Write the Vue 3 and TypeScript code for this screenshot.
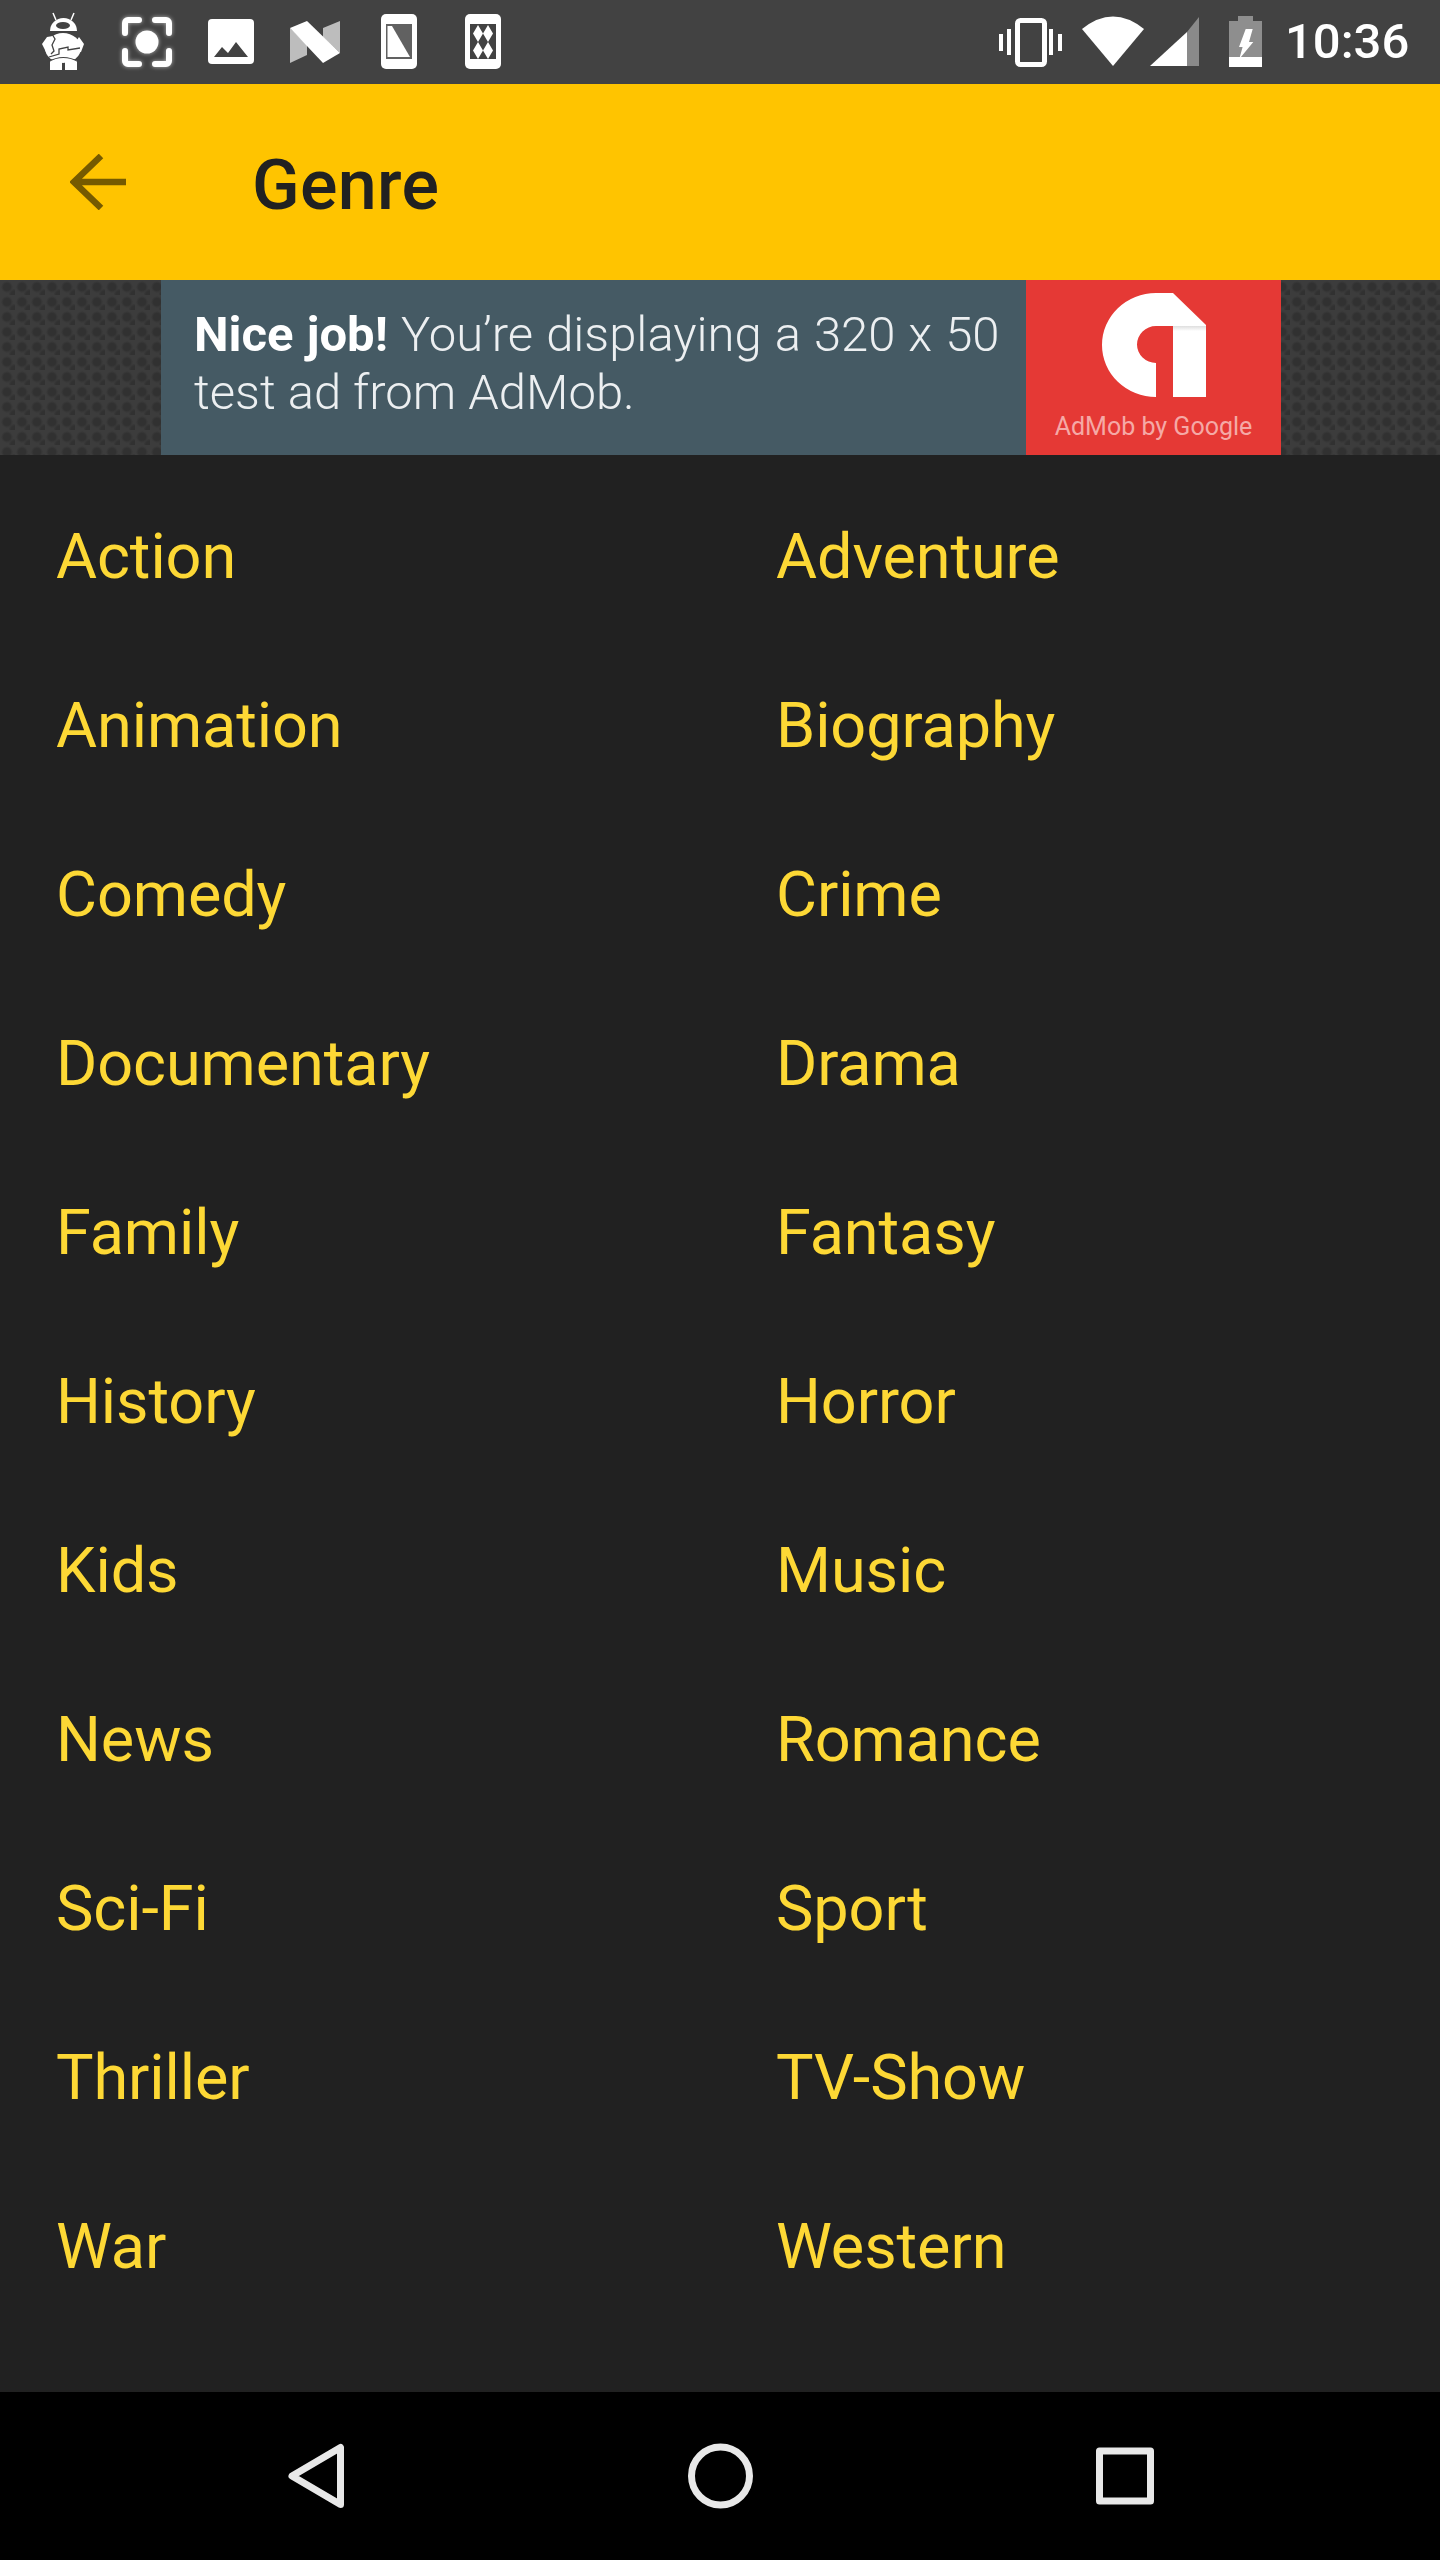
<template>
  <div class="screen">
    <div class="status-bar">
      <div class="status-left">
        <svg class="slot" viewBox="0 0 84 84" fill="#fff">
          <path d="M29 31a13.5 13 0 0 1 27 0z" />
          <path d="M35 20l-3-7M50 20l3-7" stroke="#fff" stroke-width="1.5" />
          <ellipse cx="42" cy="25.500" rx="7" ry="3.500" fill="#424242" />
          <ellipse cx="42" cy="48" rx="18" ry="15" />
          <path d="M26 37l-5 7 4 8 6 4 3-4-2-4 3-7-3-5zM58 37l5 7-3 8-5 1-1-10z" />
          <path d="M29 60h12v10H29zM44 60h12v10H44z" />
          <path d="M31 34l3 5-3 6 2 6-3 3M28 57l10-3v-5l9-2v3l12-2" fill="none" stroke="#424242" stroke-width="1.300" />
          <path d="M27 62q15-9 31 0" fill="none" stroke="#424242" stroke-width="1.200" />
        </svg>
        <svg class="slot focus" viewBox="0 0 84 84" fill="none" stroke="#fff" stroke-width="6" stroke-linecap="round" stroke-linejoin="round">
          <path d="M34 20H23a3 3 0 0 0-3 3v10M50 20h11a3 3 0 0 1 3 3v10M20 51v10a3 3 0 0 0 3 3h11M64 51v10a3 3 0 0 1-3 3H50" />
          <circle cx="42" cy="42" r="11.500" fill="#fff" stroke="none" />
        </svg>
        <svg class="slot" viewBox="0 0 84 84">
          <rect x="19" y="19" width="46" height="45" rx="4" fill="#fff" />
          <path d="M25 57l8-10 6 6 8-11 12 15z" fill="#424242" />
        </svg>
        <svg class="slot" viewBox="0 0 84 84">
          <path d="M17 28l17 17v10l-17 8zM50 28l17-7v32L50 37z" fill="#bdbdbd" />
          <path d="M17 28l17-7 33 32-17 10z" fill="#fff" />
        </svg>
        <svg class="slot" viewBox="0 0 84 84">
          <rect x="24" y="14" width="36" height="55" rx="5" fill="#fff" />
          <rect x="29" y="24" width="26" height="35" fill="#616161" />
          <path d="M30.500 26h4.500l18 31H30.500z" fill="#fff" />
        </svg>
        <svg class="slot" viewBox="0 0 84 84">
          <rect x="24" y="14" width="36" height="55" rx="5" fill="#fff" />
          <rect x="29" y="24" width="26" height="35" fill="#424242" />
          <path d="M37 25l5 8.500-5 8.500-5-8.500zM47 25l5 8.500-5 8.500-5-8.500zM37 42l5 8.500-5 8.500-5-8.500zM47 42l5 8.500-5 8.500-5-8.500z" fill="#fff" />
        </svg>
      </div>
      <div class="status-right">
        <svg class="vibrate" width="66" height="84" viewBox="0 0 66 84" fill="#fff">
          <rect x="19.500" y="20.500" width="27" height="44" rx="3" fill="none" stroke="#fff" stroke-width="5" />
          <path d="M1 34h4v17H1zM9 29h4v26H9zM51 29h4v26h-4zM60 34h4v17h-4z" />
        </svg>
        <svg class="wifi" width="62" height="84" viewBox="0 0 62 84">
          <path d="M31 66L0 29Q31 4 62 29z" fill="#fff" />
        </svg>
        <svg class="signal" width="49" height="84" viewBox="0 0 49 84">
          <path d="M37 32L49 17v49H37z" fill="#8a8a8a" />
          <path d="M0 66l37-34v34z" fill="#fff" />
        </svg>
        <svg class="battery" width="33" height="84" viewBox="0 0 33 84">
          <path d="M9 16h15v5h9v36H0V21h9z" fill="#8e8e8e" />
          <path d="M0 57h33v10H0z" fill="#fff" />
          <path d="M16.700 29h7L20 42h4.300L10.300 59l3.300-12H10z" fill="#fff" />
        </svg>
        <span class="clock">10:36</span>
      </div>
    </div>

    <header class="app-bar">
      <svg class="back" width="56" height="56" viewBox="0 0 56 56" fill="none" stroke="#755a00" stroke-width="6.500">
        <path d="M56 28H4M31 2L4 28l27 26" />
      </svg>
      <h1 class="title">Genre</h1>
    </header>

    <div class="ad-strip">
      <div class="ad">
        <div class="ad-copy">
          <p class="ad-line"><b>Nice job!</b> You’re displaying a 320 x 50</p>
          <p>test ad from AdMob.</p>
        </div>
        <div class="ad-brand">
          <svg width="104" height="104" viewBox="0 0 104 104">
            <defs>
              <linearGradient id="fold" x1="0" y1="0" x2="0" y2="1">
                <stop offset="0" stop-color="#dedede" />
                <stop offset="1" stop-color="#fff" />
              </linearGradient>
            </defs>
            <path d="M54 0H71L104 32V104H71V33H54A19 18.500 0 0 0 54 70V104A54 52 0 0 1 54 0Z" fill="#fff" />
            <rect x="71" y="33" width="33" height="5" fill="url(#fold)" />
          </svg>
          <span>AdMob by Google</span>
        </div>
      </div>
    </div>

    <main class="genres">
      <a v-for="genre in genres" :key="genre" class="genre">{{ genre }}</a>
    </main>

    <nav class="nav-bar">
      <svg width="96" height="96" viewBox="0 0 96 96" fill="none" stroke="#e8e8e8" stroke-width="7" stroke-linejoin="round">
        <path d="M72.500 19.500V76.500L24 48Z" />
      </svg>
      <svg width="96" height="96" viewBox="0 0 96 96" fill="none" stroke="#e8e8e8" stroke-width="7">
        <circle cx="48.500" cy="48" r="29" />
      </svg>
      <svg width="96" height="96" viewBox="0 0 96 96" fill="none" stroke="#e8e8e8" stroke-width="7" stroke-linejoin="round">
        <rect x="23.500" y="23" width="51" height="50" />
      </svg>
    </nav>
  </div>
</template>

<script setup lang="ts">
const genres: string[] = [
  'Action', 'Adventure',
  'Animation', 'Biography',
  'Comedy', 'Crime',
  'Documentary', 'Drama',
  'Family', 'Fantasy',
  'History', 'Horror',
  'Kids', 'Music',
  'News', 'Romance',
  'Sci-Fi', 'Sport',
  'Thriller', 'TV-Show',
  'War', 'Western'
]
</script>

<style>
html,
body {
  margin: 0;
  background: #212121;
}
</style>

<style scoped>
.screen {
  width: 1440px;
  height: 2560px;
  display: flex;
  flex-direction: column;
  font-family: Roboto, "Liberation Sans", sans-serif;
  background: #212121;
  overflow: hidden;
}

.status-bar {
  height: 84px;
  flex: none;
  display: flex;
  justify-content: space-between;
  background: #424242;
}

.status-left {
  display: flex;
  padding-left: 21px;
}

.status-right {
  display: flex;
  padding-right: 35px;
}

.slot {
  width: 84px;
  height: 84px;
}

.focus {
  filter: drop-shadow(0 0 2px rgba(255, 255, 255, 0.6));
}

.wifi {
  margin-left: 18px;
}

.signal {
  margin-left: 6px;
}

.battery {
  margin-left: 30px;
}

.clock {
  width: 120px;
  margin-left: 23px;
  font-size: 49px;
  font-weight: 500;
  line-height: 84px;
  white-space: nowrap;
  color: #fff;
}

.app-bar {
  height: 196px;
  flex: none;
  display: flex;
  align-items: center;
  padding-left: 70px;
  background: #ffc400;
}

.title {
  margin: 6px 0 0 126px;
  font-size: 70px;
  font-weight: 500;
  letter-spacing: 0.3px;
  color: #212121;
}

.ad-strip {
  height: 175px;
  flex: none;
  display: flex;
  justify-content: center;
  padding-left: 2px;
  background-color: #3c3c3c;
  background-image:
    radial-gradient(circle at 7px 7px, #313131 3.500px, transparent 6px),
    radial-gradient(circle at 14.500px 14.500px, #313131 3.500px, transparent 6px);
  background-size: 15px 15px;
}

.ad {
  width: 1120px;
  display: flex;
  background: #455a64;
}

.ad-copy {
  flex: 1;
  padding: 26px 0 0 33px;
  font-size: 49px;
  font-weight: 300;
  line-height: 58px;
  color: #eceff1;
}

.ad-copy p {
  margin: 0;
}

.ad-copy .ad-line {
  word-spacing: 1px;
}

.ad-copy b {
  font-weight: 700;
  color: #fff;
}

.ad-brand {
  width: 255px;
  display: flex;
  flex-direction: column;
  align-items: center;
  padding-top: 13px;
  box-sizing: border-box;
  background: #e53935;
}

.ad-brand span {
  margin-top: 15px;
  font-size: 25px;
  color: #f5a9a6;
}

.genres {
  flex: 1;
  display: grid;
  grid-template-columns: 720px 720px;
  grid-auto-rows: 169px;
  align-content: start;
  padding-top: 17px;
}

.genre {
  display: flex;
  align-items: center;
  padding-left: 56px;
  font-size: 63px;
  letter-spacing: -0.1px;
  color: #fdd835;
}

.nav-bar {
  height: 168px;
  flex: none;
  display: grid;
  grid-template-columns: 404px 404px 404px;
  justify-content: center;
  justify-items: center;
  align-items: center;
  background: #000;
}
</style>
